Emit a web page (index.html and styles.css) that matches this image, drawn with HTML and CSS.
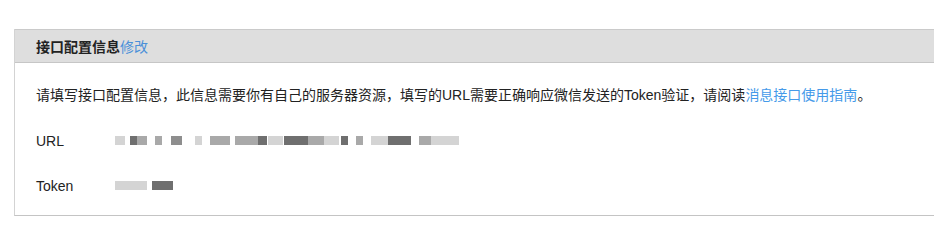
FILE: index.html
```html
<!DOCTYPE html>
<html lang="zh-CN">
<head>
  <meta charset="UTF-8">
  <title>接口配置信息</title>
  <link rel="stylesheet" href="styles.css">
</head>
<body>
  <div class="panel">
    <div class="panel-hd">
      <h3>接口配置信息<a href="#">修改</a></h3>
    </div>
    <div class="panel-bd">
      <p class="tips">请填写接口配置信息，此信息需要你有自己的服务器资源，填写的URL需要正确响应微信发送的Token验证，请阅读<a href="#">消息接口使用指南</a>。</p>
      <div class="field">
        <label>URL</label>
        <div class="mosaic" id="url-val"></div>
      </div>
      <div class="field">
        <label>Token</label>
        <div class="mosaic" id="token-val"></div>
      </div>
    </div>
  </div>
  <script>
    // blurred values: [width, shade, gap before]
    const urlBlocks = [
      [10, "l", 0], [7, "d", 5], [10, "m", 0], [7, "m", 8], [11, "dm", 9], [7, "l", 13],
      [20, "m", 8], [23, "m", 5], [9, "d", 0], [15, "l", 1], [24, "d", 1], [16, "m", 0],
      [15, "l", 0], [7, "d", 2], [7, "m", 8], [17, "l", 8], [23, "d", 0], [12, "m", 8], [28, "l", 0]
    ];
    const tokenBlocks = [[32, "l", 0], [21, "d", 5]];

    function pintar(id, blocos) {
      const el = document.getElementById(id);
      blocos.forEach(([w, tom, gap]) => {
        const b = document.createElement("span");
        b.className = "blk " + tom;
        b.style.width = w + "px";
        b.style.marginLeft = gap + "px";
        el.appendChild(b);
      });
    }
    pintar("url-val", urlBlocks);
    pintar("token-val", tokenBlocks);
  </script>
</body>
</html>
```
FILE: styles.css
```css
body {
  margin: 0;
  background: #fff;
  font-family: "Liberation Sans", "Noto Sans CJK SC", sans-serif;
  font-size: 14px;
  color: #222;
  overflow: hidden;
}
a {
  color: #459ae9;
  text-decoration: none;
}
.panel {
  margin: 29px 0 0 14px;
  border: 1px solid #d3d3d3;
  border-right: 0;
  border-bottom-color: #c4c4c4;
}
.panel-hd {
  height: 32px;
  background: #dedede;
  border-bottom: 1px solid #c6c6c6;
  border-top: 1px solid #cacaca;
  margin-top: -1px;
  padding-left: 21px;
  display: flex;
  align-items: center;
}
.panel-hd h3 {
  margin: 0;
  font-size: 14px;
  font-weight: bold;
  color: #222;
}
.panel-hd a {
  font-weight: normal;
  color: #4a90d9;
}
.panel-bd {
  padding: 22px 21px 7px;
}
.tips {
  margin: 0 0 13px;
  line-height: 20px;
}
.field {
  display: flex;
  align-items: center;
  height: 45px;
}
.field label {
  width: 79px;
}
.mosaic {
  display: flex;
  align-items: center;
  height: 9px;
}
.blk {
  display: inline-block;
  height: 9px;
}
.blk.l { background: #d4d4d4; }
.blk.m { background: #a9a9a9; }
.blk.dm { background: #8e8e8e; }
.blk.d { background: #6f6f6f; }
```
